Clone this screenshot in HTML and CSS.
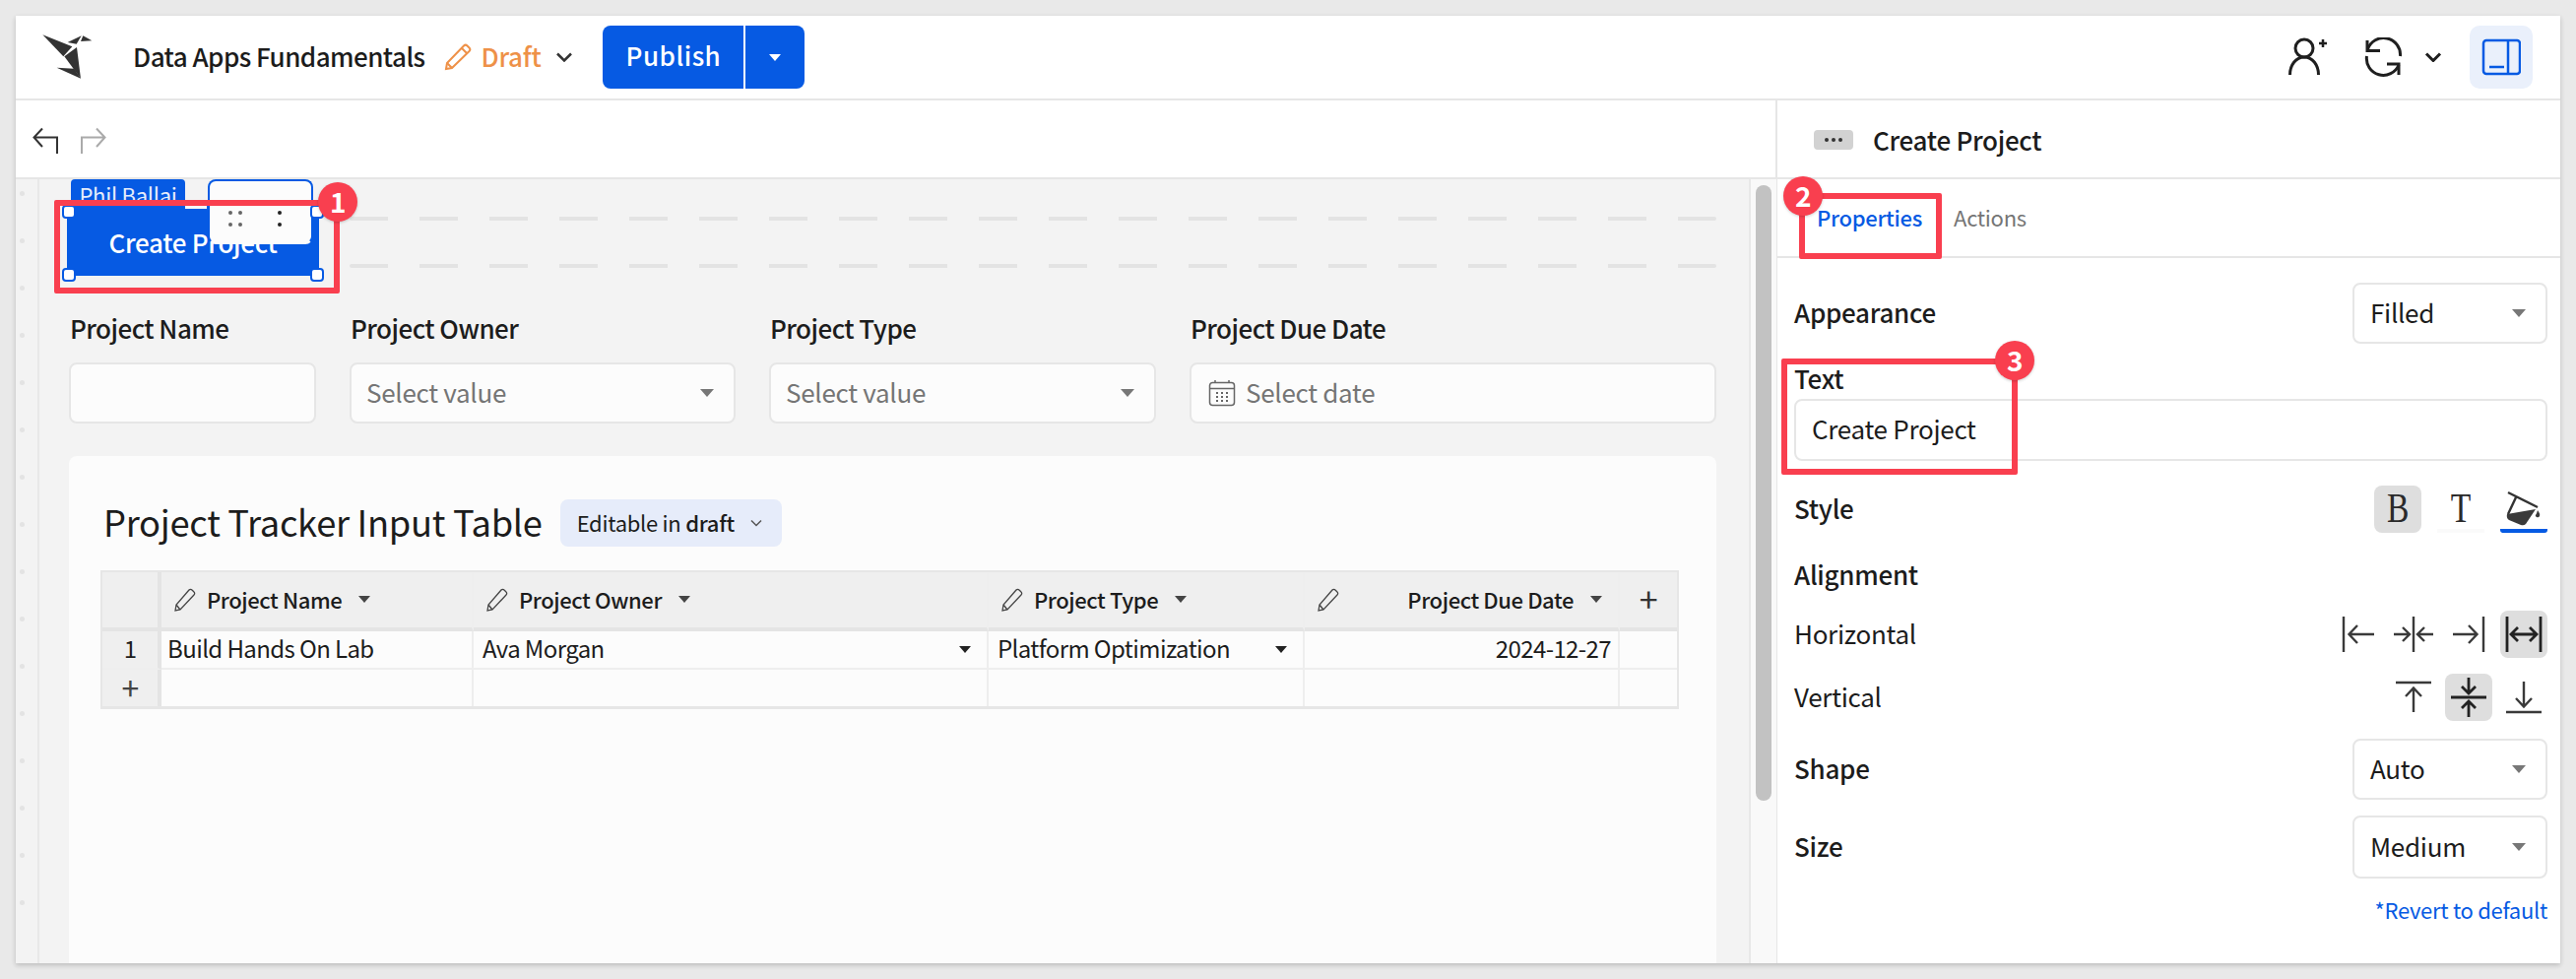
FILE: index.html
```html
<!DOCTYPE html>
<html>
<head>
  <meta name="viewport" content="width=device-width, initial-scale=1.0">
  <title>Data Apps Fundamentals</title>
  <link rel="stylesheet" href="styles.css">
</head>
<body>
  <div class="app">
    <div class="topbar">
      <svg class="logo" width="70" height="60" viewBox="0 0 210 180" fill="#333">
        <polygon points="22,22 112,58 85,88"/>
        <polygon points="98,45 140,25 125,50"/>
        <polygon points="145,25 172,40 138,42"/>
        <polygon points="126,60 88,88 138,155"/>
        <polygon points="65,122 118,125 138,155"/>
      </svg>
      <span class="doc-name">Data Apps Fundamentals</span>
      <svg class="draft-pencil" width="28" height="28" viewBox="0 0 28 28" fill="none" stroke="#ee9148" stroke-width="2">
        <path d="M2 26l1-6L20 2.500a2.500 2.500 0 0 1 3.500 0l2 2a2.500 2.500 0 0 1 0 3.500L8 25z"/>
        <path d="M3 20l5 5M18 5l5.500 5.500"/>
      </svg>
      <span class="draft-label">Draft</span>
      <svg class="chev" width="18" height="10" viewBox="0 0 18 10" fill="none" stroke="#333" stroke-width="2.500"><path d="M2 1.500l7 7 7-7"/></svg>
      <div class="publish">
        <span class="publish-main">Publish</span>
        <span class="publish-more"><i class="caret caret-white"></i></span>
      </div>
      <div class="top-right">
        <svg class="icon-user" width="44" height="40" viewBox="0 0 44 40" fill="none" stroke="#1f1f1f" stroke-width="3">
          <circle cx="18" cy="11" r="9"/>
          <path d="M3.500 38c0-10 6-18 14.500-18s14.500 8 14.500 18"/>
          <path d="M33 6h8M37 2v8" stroke-width="2.500"/>
        </svg>
        <svg class="icon-sync" width="40" height="40" viewBox="0 0 40 40" fill="none" stroke="#1f1f1f" stroke-width="3">
          <path d="M4.500 12A17 17 0 0 1 37.500 19"/>
          <path d="M4 3v10.500h13"/>
          <path d="M36 28A17 17 0 0 1 3.500 19"/>
          <path d="M36 38V27H24"/>
        </svg>
        <svg class="chev-sync" width="18" height="10" viewBox="0 0 18 10" fill="none" stroke="#1f1f1f" stroke-width="3"><path d="M2 1.500l7 7 7-7"/></svg>
        <div class="panel-toggle">
          <svg width="40" height="38" viewBox="0 0 40 38" fill="none" stroke="#065ae3" stroke-width="2.500">
            <rect x="2" y="2" width="37" height="34" rx="3"/>
            <path d="M27 2v34M8 29h15"/>
          </svg>
        </div>
      </div>
    </div>

    <div class="main">
      <div class="left">
        <div class="toolbar">
          <svg width="26" height="28" viewBox="0 0 26 28" fill="none" stroke="#333" stroke-width="2"><path d="M25 27V10.500H2M10 1.500L1.500 10.500 10 20"/></svg>
          <svg width="26" height="28" viewBox="0 0 26 28" fill="none" stroke="#aaa" stroke-width="2"><path d="M1 27V10.500H24M16 1.500L24.500 10.500 16 20"/></svg>
        </div>
        <div class="workspace">
          <div class="ruler"><i></i><i></i><i></i><i></i><i></i><i></i><i></i><i></i><i></i><i></i><i></i><i></i><i></i><i></i><i></i><i></i></div>
          <div class="canvas">
            <div class="button-row">
              <div class="big-button">Create Project</div>
              <div class="dash-lines"><div class="dashes"></div><div class="dashes"></div></div>
            </div>
            <div class="fields">
              <div class="field">
                <p class="field-label">Project Name</p>
                <div class="input-box"></div>
              </div>
              <div class="field">
                <p class="field-label">Project Owner</p>
                <div class="input-box"><span class="placeholder">Select value</span><i class="caret"></i></div>
              </div>
              <div class="field">
                <p class="field-label">Project Type</p>
                <div class="input-box"><span class="placeholder">Select value</span><i class="caret"></i></div>
              </div>
              <div class="field">
                <p class="field-label">Project Due Date</p>
                <div class="input-box input-date">
                  <svg width="28" height="28" viewBox="0 0 28 28" fill="none" stroke="#666" stroke-width="1.500">
                    <rect x="1.500" y="3.500" width="25" height="23" rx="3"/>
                    <path d="M1.500 9.500h25M7 1v3M21 1v3"/>
                    <path d="M8 14h2M13 14h2M18 14h2M8 18h2M13 18h2M18 18h2M8 22h2M13 22h2M18 22h2" stroke-width="1.800"/>
                  </svg>
                  <span class="placeholder">Select date</span>
                </div>
              </div>
            </div>
            <div class="card">
              <div class="card-title">
                <h2>Project Tracker Input Table</h2>
                <div class="pill">Editable in <b>draft</b>
                  <svg width="12" height="8" viewBox="0 0 12 8" fill="none" stroke="#555" stroke-width="1.500"><path d="M1 1.500l5 5 5-5"/></svg>
                </div>
              </div>
              <table class="grid">
                <colgroup>
                  <col class="c-num"><col class="c-name"><col class="c-owner"><col class="c-type"><col class="c-date"><col class="c-add">
                </colgroup>
                <tr class="head">
                  <th class="num"></th>
                  <th><div class="th-in">
                    <svg class="pen" width="24" height="24" viewBox="0 0 24 24" fill="none" stroke="#444" stroke-width="1.300"><path d="M2 23l1-6L16 2a2 2 0 0 1 3 0l2 2a2 2 0 0 1 0 3L7 22zM3 17l4 5"/></svg>
                    Project Name <i class="caret caret-dark"></i></div></th>
                  <th><div class="th-in">
                    <svg class="pen" width="24" height="24" viewBox="0 0 24 24" fill="none" stroke="#444" stroke-width="1.300"><path d="M2 23l1-6L16 2a2 2 0 0 1 3 0l2 2a2 2 0 0 1 0 3L7 22zM3 17l4 5"/></svg>
                    Project Owner <i class="caret caret-dark"></i></div></th>
                  <th><div class="th-in">
                    <svg class="pen" width="24" height="24" viewBox="0 0 24 24" fill="none" stroke="#444" stroke-width="1.300"><path d="M2 23l1-6L16 2a2 2 0 0 1 3 0l2 2a2 2 0 0 1 0 3L7 22zM3 17l4 5"/></svg>
                    Project Type <i class="caret caret-dark"></i></div></th>
                  <th><div class="th-in th-date">
                    <svg class="pen" width="24" height="24" viewBox="0 0 24 24" fill="none" stroke="#444" stroke-width="1.300"><path d="M2 23l1-6L16 2a2 2 0 0 1 3 0l2 2a2 2 0 0 1 0 3L7 22zM3 17l4 5"/></svg>
                    <span class="th-date-text">Project Due Date</span> <i class="caret caret-dark"></i></div></th>
                  <th class="add">+</th>
                </tr>
                <tr>
                  <td class="num">1</td>
                  <td>Build Hands On Lab</td>
                  <td><div class="cell-pick">Ava Morgan<i class="caret caret-black"></i></div></td>
                  <td><div class="cell-pick">Platform Optimization<i class="caret caret-black"></i></div></td>
                  <td class="right">2024-12-27</td>
                  <td></td>
                </tr>
                <tr>
                  <td class="num num-add">+</td>
                  <td></td><td></td><td></td><td></td><td></td>
                </tr>
              </table>
            </div>
          </div>
          <div class="scroll-track"><div class="scroll-thumb"></div></div>
        </div>
      </div>

      <div class="panel">
        <div class="panel-head">
          <span class="dots-badge">
            <svg width="20" height="6" viewBox="0 0 20 6" fill="#333"><circle cx="3" cy="3" r="2"/><circle cx="10" cy="3" r="2"/><circle cx="17" cy="3" r="2"/></svg>
          </span>
          <span class="panel-title">Create Project</span>
        </div>
        <div class="tabs">
          <span class="tab tab-active">Properties</span>
          <span class="tab">Actions</span>
        </div>
        <div class="props">
          <div class="prop-row">
            <span class="prop-label">Appearance</span>
            <div class="select-box">Filled<i class="caret"></i></div>
          </div>
          <p class="text-label">Text</p>
          <div class="text-input">Create Project</div>
          <div class="prop-row style-row">
            <span class="prop-label">Style</span>
            <div class="icons icons-style">
              <span class="icon-btn on letter"><span class="letter-in">B</span></span>
              <span class="icon-btn letter letter-under"><span class="letter-in">T</span></span>
              <span class="icon-btn paint">
                <svg width="48" height="48" viewBox="0 0 48 48" fill="none" stroke="#333" stroke-width="2.400">
                  <path d="M8 7l30 15M16 12L8 29"/>
                  <path d="M7 29l29-5-10 15q-2 2-5 1L9 35q-3-2-2-6z" fill="#3a3a3a" stroke="none"/>
                  <path d="M38 25q3 4 2 6t-3 1-1-2 2-5z" fill="#3a3a3a" stroke="none"/>
                </svg>
              </span>
            </div>
          </div>
          <p class="section-label">Alignment</p>
          <div class="prop-row align-row">
            <span class="prop-label light">Horizontal</span>
            <div class="icons">
              <span class="icon-btn"><svg width="48" height="48" viewBox="0 0 48 48" fill="none" stroke="#3a3a3a" stroke-width="2.400"><path d="M9 6v36M40 24H15M23 15l-8.500 9 8.500 9"/></svg></span>
              <span class="icon-btn"><svg width="48" height="48" viewBox="0 0 48 48" fill="none" stroke="#3a3a3a" stroke-width="2.400"><path d="M24 6v36M4 24h15M13 17l7 7-7 7M44 24H29M35 17l-7 7 7 7"/></svg></span>
              <span class="icon-btn"><svg width="48" height="48" viewBox="0 0 48 48" fill="none" stroke="#3a3a3a" stroke-width="2.400"><path d="M39 6v36M8 24h25M24 15l8.500 9-8.500 9"/></svg></span>
              <span class="icon-btn on"><svg width="48" height="48" viewBox="0 0 48 48" fill="none" stroke="#222" stroke-width="2.800"><path d="M7 6v36M41 6v36M11 24h26M18 17l-7 7 7 7M30 17l7 7-7 7"/></svg></span>
            </div>
          </div>
          <div class="prop-row align-row">
            <span class="prop-label light">Vertical</span>
            <div class="icons">
              <span class="icon-btn"><svg width="48" height="48" viewBox="0 0 48 48" fill="none" stroke="#3a3a3a" stroke-width="2.400"><path d="M6 9h36M24 39V15M16 23l8-8.500 8 8.500"/></svg></span>
              <span class="icon-btn on"><svg width="48" height="48" viewBox="0 0 48 48" fill="none" stroke="#222" stroke-width="2.800"><path d="M6 24h36M24 4v15M17 13l7 7 7-7M24 44V29M17 35l7-7 7 7"/></svg></span>
              <span class="icon-btn"><svg width="48" height="48" viewBox="0 0 48 48" fill="none" stroke="#3a3a3a" stroke-width="2.400"><path d="M6 39h36M24 8v25M16 25l8 8.500 8-8.500"/></svg></span>
            </div>
          </div>
          <div class="prop-row shape-row">
            <span class="prop-label">Shape</span>
            <div class="select-box">Auto<i class="caret"></i></div>
          </div>
          <div class="prop-row size-row">
            <span class="prop-label">Size</span>
            <div class="select-box">Medium<i class="caret"></i></div>
          </div>
          <p class="revert">*Revert to default</p>
        </div>
      </div>
    </div>

    <!-- stuff floating above the canvas -->
    <div class="user-tag">Phil Ballai</div>
    <div class="tag-notch"></div>
    <div class="float-tools">
      <span class="grip"><i></i><i></i><i></i><i></i></span>
      <span class="grip grip-dark"><i></i><i></i></span>
    </div>
    <i class="handle h1"></i><i class="handle h2"></i><i class="handle h3"></i><i class="handle h4"></i>

    <!-- red callouts -->
    <div class="callout box1"></div>
    <div class="callout box2"></div>
    <div class="callout box3"></div>
    <span class="badge b1">1</span>
    <span class="badge b2">2</span>
    <span class="badge b3">3</span>
  </div>
</body>
</html>
```

FILE: styles.css
```css
* {
  box-sizing: border-box;
}

html, body {
  height: 994px;
  overflow: hidden;
}

body {
  margin: 0;
  padding: 16px;
  background-color: #e9e9e9;
  font-family: "Noto Sans CJK SC", "Noto Sans", sans-serif;
  letter-spacing: -0.018em;
  color: #1c1c1c;
}

p {
  margin: 0;
}

.app {
  position: relative;
  height: 962px;
  background-color: #fff;
  display: flex;
  flex-direction: column;
  box-shadow: 0 2px 5px rgba(0, 0, 0, 0.2);
  overflow: hidden;
}

/* top bar */
.topbar {
  height: 86px;
  flex: none;
  border-bottom: 2px solid #e6e6e6;
  display: flex;
  align-items: center;
  padding-left: 20px;
}

.doc-name {
  margin-left: 29px;
  padding-bottom: 3px;
  font-size: 26px;
  font-weight: 500;
  line-height: 32px;
  letter-spacing: -0.021em;
}

.draft-pencil {
  margin-left: 19px;
}

.draft-label {
  margin-left: 10px;
  padding-bottom: 3px;
  font-size: 26px;
  font-weight: 500;
  line-height: 32px;
  color: #ee9148;
}

.chev {
  margin-left: 15px;
}

.publish {
  margin-left: 30px;
  height: 64px;
  display: flex;
  color: #fff;
}

.publish-main {
  width: 143px;
  background-color: #065ae3;
  border-radius: 8px 0 0 8px;
  font-size: 26px;
  font-weight: 500;
  line-height: 60px;
  letter-spacing: 0.5px;
  text-align: center;
}

.publish-more {
  width: 60px;
  margin-left: 2px;
  background-color: #065ae3;
  border-radius: 0 8px 8px 0;
  display: flex;
  align-items: center;
  justify-content: center;
}

.top-right {
  margin-left: auto;
  margin-right: 28px;
  display: flex;
  align-items: center;
}

.icon-sync {
  margin-left: 34px;
}

.chev-sync {
  margin-left: 22px;
}

.panel-toggle {
  margin-left: 28px;
  width: 64px;
  height: 64px;
  background-color: #eaf0fb;
  border-radius: 10px;
  display: flex;
  align-items: center;
  justify-content: center;
}

/* carets */
.caret {
  display: inline-block;
  width: 0;
  height: 0;
  border-left: 7px solid transparent;
  border-right: 7px solid transparent;
  border-top: 8px solid #777;
  flex: none;
}

.caret-white {
  border-left-width: 6px;
  border-right-width: 6px;
  border-top: 7px solid #fff;
}

.caret-dark {
  border-left-width: 6px;
  border-right-width: 6px;
  border-top: 7px solid #444;
  margin-left: 17px;
}

.caret-black {
  border-left-width: 6px;
  border-right-width: 6px;
  border-top: 7px solid #222;
}

/* main area */
.main {
  flex: 1;
  display: flex;
  min-height: 0;
}

.left {
  width: 1787px;
  flex: none;
  display: flex;
  flex-direction: column;
}

.toolbar {
  height: 80px;
  flex: none;
  border-bottom: 2px solid #e6e6e6;
  display: flex;
  align-items: center;
  gap: 23px;
  padding: 4px 0 0 17px;
}

.workspace {
  flex: 1;
  min-height: 0;
  display: flex;
  background-color: #f3f3f3;
}

.ruler {
  width: 24px;
  flex: none;
  border-right: 2px solid #e8e8e8;
  padding-top: 12px;
  overflow: hidden;
}

.ruler i {
  display: block;
  width: 5px;
  height: 5px;
  margin: 0 0 43px 4px;
  border-radius: 50%;
  background-color: #e3e3e3;
}

.canvas {
  width: 1736px;
  flex: none;
  padding: 26px 33px 0 30px;
  overflow: hidden;
}

.button-row {
  display: flex;
  height: 72px;
}

.big-button {
  width: 256px;
  margin-left: -2px;
  background-color: #065ae3;
  color: #fff;
  font-size: 26px;
  font-weight: 500;
  line-height: 76px;
  text-align: center;
}

.dash-lines {
  flex: 1;
  margin-left: 31px;
  padding-top: 12px;
}

.dashes {
  height: 4px;
  margin-bottom: 44px;
  border-radius: 2px;
  background-image: repeating-linear-gradient(90deg, #e3e3e3 0, #e3e3e3 39px, transparent 39px, transparent 71px);
}

.fields {
  display: grid;
  grid-template-columns: 251px 392px 393px 1fr;
  column-gap: 34px;
  margin-top: 39px;
}

.field-label {
  height: 49px;
  padding-left: 1px;
  font-size: 26px;
  font-weight: 500;
  line-height: 28px;
  letter-spacing: -0.021em;
}

.input-box {
  height: 62px;
  background-color: #fcfcfc;
  border: 2px solid #e6e6e6;
  border-radius: 8px;
  display: flex;
  align-items: center;
  justify-content: space-between;
  padding: 0 20px 0 15px;
}

.placeholder {
  padding-bottom: 3px;
  font-size: 26px;
  line-height: 32px;
  color: #757575;
}

.input-date {
  justify-content: flex-start;
  gap: 10px;
  padding-left: 17px;
}

/* card with the table */
.card {
  margin-top: 33px;
  height: 560px;
  background-color: #fcfcfc;
  border-radius: 8px;
  padding: 44px 38px 0 32px;
}

.card-title {
  display: flex;
  align-items: center;
  height: 48px;
  padding-left: 3px;
}

.card-title h2 {
  margin: 0;
  padding-bottom: 4px;
  font-size: 36.300px;
  font-weight: 400;
  line-height: 48px;
}

.pill {
  margin-left: 18px;
  height: 48px;
  width: 225px;
  background-color: #e6ecfa;
  border-radius: 8px;
  display: flex;
  align-items: center;
  padding: 0 0 3px 17px;
  font-size: 22px;
  line-height: 28px;
  white-space: pre;
}

.pill b {
  font-weight: 500;
}

.pill svg {
  margin: 3px 0 0 16px;
}

.grid {
  margin-top: 24px;
  width: 1603px;
  table-layout: fixed;
  border-collapse: separate;
  border-spacing: 0;
  border: 2px solid #e6e6e6;
  border-bottom-width: 3px;
  font-size: 24px;
  letter-spacing: -0.025em;
}

.c-num { width: 60px; }
.c-name { width: 317px; }
.c-owner { width: 523px; }
.c-type { width: 321px; }
.c-date { width: 320px; }
.c-add { width: 58px; }

.grid th, .grid td {
  padding: 0;
  border-right: 2px solid #eee;
  font-weight: 400;
}

.grid th:last-child, .grid td:last-child {
  border-right: none;
}

.head th {
  height: 60px;
  background-color: #efefef;
  border-bottom: 4px solid #e4e4e4;
  font-size: 22px;
  font-weight: 500;
  text-align: left;
  letter-spacing: -0.018em;
}

.grid td {
  height: 39px;
  line-height: 30px;
  padding: 0 0 3px 6px;
  border-bottom: 2px solid #eee;
}

.grid tr:last-child td {
  border-bottom: none;
  height: 37px;
}

.grid .num {
  background-color: #efefef;
  border-right: 4px solid #e4e4e4;
  text-align: center;
  padding: 0 0 3px 0;
}

.grid .num-add {
  font-size: 32px;
  color: #444;
}

.grid .right {
  text-align: right;
  padding-right: 7px;
}

.th-in {
  display: flex;
  align-items: center;
  padding: 0 0 2px 12px;
}

.pen {
  margin: 2px 10px 0 0;
}

.th-date-text {
  margin-left: auto;
}

.th-date {
  padding-right: 16px;
}

.add {
  text-align: center !important;
  font-size: 34px !important;
  font-weight: 400 !important;
  color: #333;
  padding-bottom: 4px !important;
}

.cell-pick {
  display: flex;
  align-items: center;
  justify-content: space-between;
  padding: 0 16px 0 3px;
}

.cell-pick .caret {
  margin-top: 3px;
}

/* right panel */
.scroll-track {
  flex: 1;
  position: relative;
  border-left: 2px solid #e8e8e8;
  background-color: #f9f9f9;
  padding: 6px 5px 0 5px;
}

.scroll-thumb {
  width: 16px;
  height: 625px;
  border-radius: 8px;
  background-color: #c2c2c2;
}

.panel {
  flex: 1;
  border-left: 2px solid #e6e6e6;
  display: flex;
  flex-direction: column;
}

.panel-head {
  height: 80px;
  flex: none;
  border-bottom: 2px solid #e6e6e6;
  display: flex;
  align-items: center;
  padding: 2px 0 0 37px;
}

.dots-badge {
  width: 40px;
  height: 20px;
  background-color: #d2d2d2;
  border-radius: 4px;
  display: flex;
  align-items: center;
  justify-content: center;
}

.panel-title {
  margin-left: 20px;
  font-size: 26px;
  font-weight: 500;
  line-height: 32px;
}

.tabs {
  height: 80px;
  flex: none;
  border-bottom: 2px solid #e6e6e6;
  display: flex;
  gap: 32px;
  padding: 20px 0 0 40px;
}

.tab {
  font-size: 22px;
  line-height: 36px;
  color: #757575;
}

.tab-active {
  color: #065ae3;
  font-weight: 500;
}

.props {
  padding: 25px 13px 0 17px;
}

.prop-row {
  display: flex;
  align-items: center;
  justify-content: space-between;
}

.prop-label {
  padding-bottom: 3px;
  font-size: 26px;
  font-weight: 500;
  line-height: 32px;
}

.prop-label.light {
  font-weight: 400;
}

.select-box {
  width: 198px;
  height: 62px;
  border: 2px solid #e6e6e6;
  border-radius: 8px;
  display: flex;
  align-items: center;
  justify-content: space-between;
  padding: 0 20px 3px 16px;
  font-size: 26px;
  line-height: 32px;
}

.select-box .caret {
  margin-top: 3px;
}

.text-label {
  height: 56px;
  padding-top: 20px;
  font-size: 26px;
  font-weight: 500;
  line-height: 30px;
}

.text-input {
  height: 63px;
  border: 2px solid #e6e6e6;
  border-radius: 8px;
  padding-left: 16px;
  font-size: 26px;
  line-height: 55px;
}

.style-row {
  margin-top: 25px;
}

.section-label {
  height: 79px;
  padding-top: 26px;
  font-size: 26px;
  font-weight: 500;
  line-height: 32px;
}

.icons {
  display: flex;
  gap: 8px;
}

.icons-style {
  gap: 16px;
}

.icon-btn {
  width: 48px;
  height: 48px;
  border-radius: 8px;
  display: block;
  position: relative;
}

.icon-btn svg {
  display: block;
}

.icon-btn.on {
  background-color: #dedede;
}

.letter {
  font-family: "Liberation Serif", serif;
  font-size: 42px;
  line-height: 46px;
  text-align: center;
  color: #2a2a2a;
}

.letter-in {
  display: block;
  transform: scaleX(0.8);
}

.letter-under {
  border-bottom: 4px solid #fafafa;
  border-radius: 0;
}

.paint {
  border-bottom: 4px solid #065ae3;
  border-radius: 0 0 3px 3px;
  overflow: hidden;
}

.align-row {
  margin-bottom: 16px;
}

.shape-row {
  margin-top: 18px;
}

.size-row {
  margin-top: 16px;
}

.size-row .select-box {
  height: 64px;
}

.revert {
  margin-top: 17px;
  font-size: 22px;
  line-height: 28px;
  text-align: right;
  color: #065ae3;
}

/* overlays */
.user-tag {
  position: absolute;
  left: 56px;
  top: 166px;
  width: 116px;
  height: 32px;
  padding-top: 1px;
  background-color: #065ae3;
  border-radius: 4px 4px 0 0;
  color: #e6edfb;
  font-size: 22px;
  line-height: 28px;
  text-align: center;
}

.tag-notch {
  position: absolute;
  left: 172px;
  top: 187px;
  width: 22px;
  height: 9px;
  background-color: #f8f8f8;
}

.float-tools {
  position: absolute;
  left: 195px;
  top: 166px;
  width: 107px;
  height: 66px;
  background-color: #fcfcfc;
  border: 2px solid #065ae3;
  border-bottom-color: #fcfcfc;
  border-radius: 8px;
  display: flex;
  gap: 24px;
  padding: 30px 0 0 19px;
}

.grip {
  display: grid;
  grid-template-columns: 4px 4px;
  grid-auto-rows: 4px;
  column-gap: 6px;
  row-gap: 8px;
}

.grip i {
  background-color: #666;
  border-radius: 50%;
}

.grip-dark {
  grid-template-columns: 4px;
  margin-left: 12px;
}

.grip-dark i {
  background-color: #222;
}

.handle {
  position: absolute;
  width: 14px;
  height: 14px;
  background-color: #fff;
  border: 2px solid #065ae3;
  border-radius: 4px;
}

.h1 { left: 47px; top: 192px; }
.h2 { left: 299px; top: 192px; }
.h3 { left: 47px; top: 256px; }
.h4 { left: 299px; top: 256px; }

.callout {
  position: absolute;
  border: 6px solid #f93f4f;
  border-radius: 2px;
}

.box1 { left: 39px; top: 187px; width: 290px; height: 95px; }
.box2 { left: 1811px; top: 180px; width: 145px; height: 67px; }
.box3 { left: 1793px; top: 348px; width: 240px; height: 118px; }

.badge {
  position: absolute;
  width: 40px;
  height: 40px;
  border-radius: 50%;
  background-color: #f93f4f;
  color: #fff;
  font-size: 28px;
  font-weight: 700;
  line-height: 38px;
  text-align: center;
  box-shadow: 0 1px 3px rgba(0, 0, 0, 0.2);
}

.b1 { left: 307px; top: 169px; }
.b2 { left: 1795px; top: 163px; }
.b3 { left: 2010px; top: 330px; }
```
